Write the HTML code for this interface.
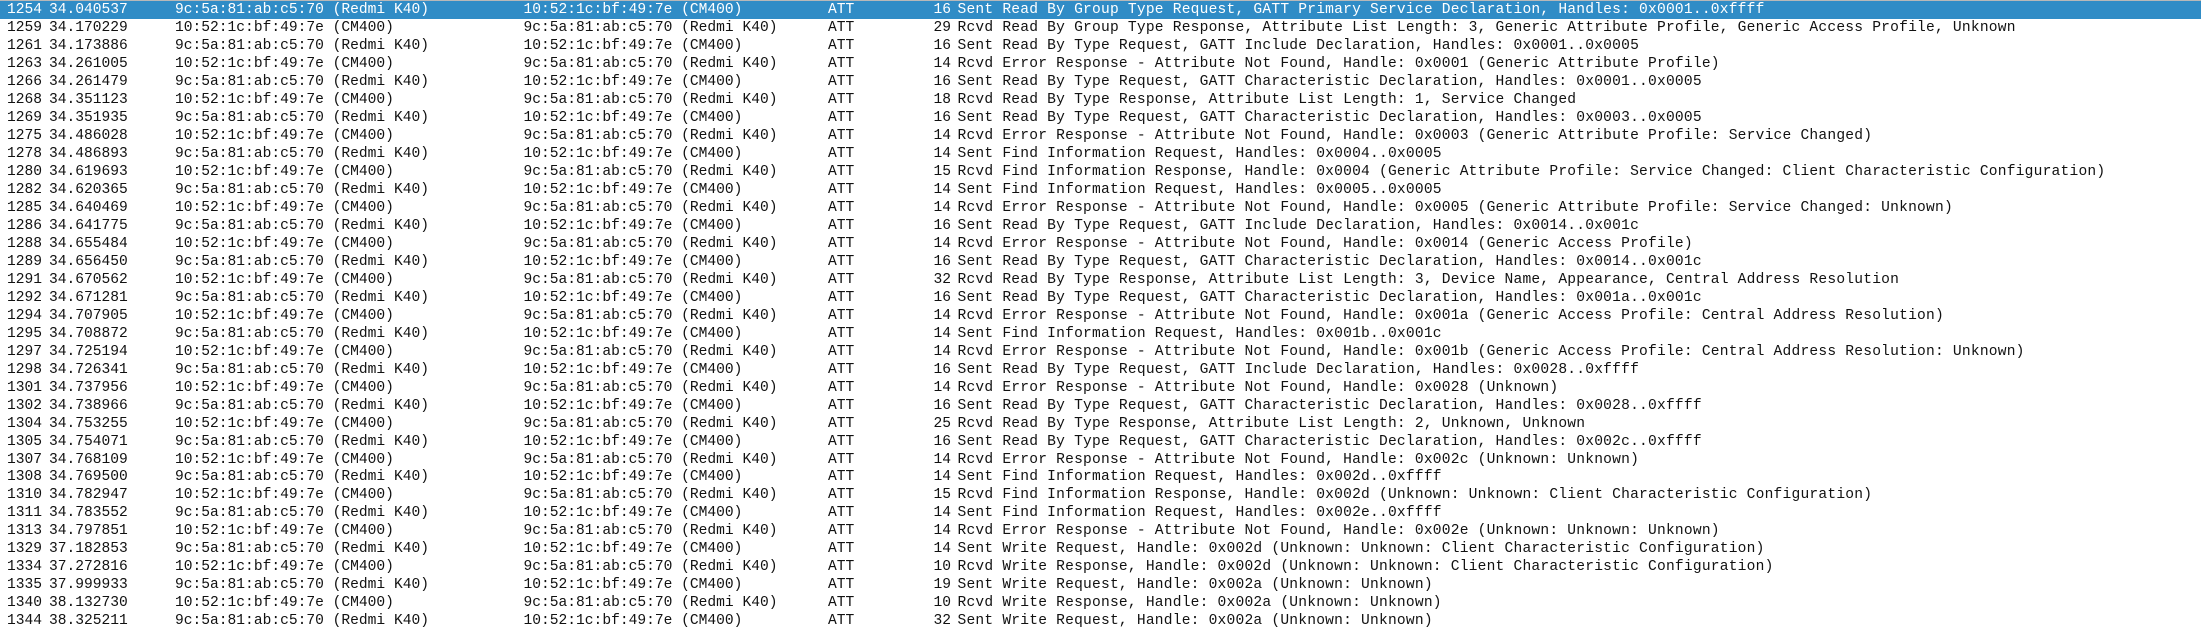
<!DOCTYPE html>
<html><head><meta charset="utf-8"><style>
html,body{margin:0;padding:0;width:2201px;height:630px;background:#fff;overflow:hidden}
body{position:relative;font-family:"Liberation Mono",monospace;font-size:14.6px;color:#111}
.topline{position:absolute;left:0;top:0;width:2201px;height:1px;background:#b8b8b8}
.r{position:absolute;left:0;width:2201px;height:18px;line-height:18px;white-space:pre}
.r span{position:absolute;top:0}
.sel{background:#308cc6;color:#fff}
.n{left:7px}.t{left:49px}.s{left:175px}.d{left:523.5px}.p{left:828px}
.l{right:1250px;text-align:right}
.i{left:957.5px;letter-spacing:0.21px}
</style></head><body>
<div class="topline"></div>
<div id="rows"></div>
<script>
var A="9c:5a:81:ab:c5:70 (Redmi K40)",B="10:52:1c:bf:49:7e (CM400)";
var d=[
["1254","34.040537",A,B,"16","Sent Read By Group Type Request, GATT Primary Service Declaration, Handles: 0x0001..0xffff"],
["1259","34.170229",B,A,"29","Rcvd Read By Group Type Response, Attribute List Length: 3, Generic Attribute Profile, Generic Access Profile, Unknown"],
["1261","34.173886",A,B,"16","Sent Read By Type Request, GATT Include Declaration, Handles: 0x0001..0x0005"],
["1263","34.261005",B,A,"14","Rcvd Error Response - Attribute Not Found, Handle: 0x0001 (Generic Attribute Profile)"],
["1266","34.261479",A,B,"16","Sent Read By Type Request, GATT Characteristic Declaration, Handles: 0x0001..0x0005"],
["1268","34.351123",B,A,"18","Rcvd Read By Type Response, Attribute List Length: 1, Service Changed"],
["1269","34.351935",A,B,"16","Sent Read By Type Request, GATT Characteristic Declaration, Handles: 0x0003..0x0005"],
["1275","34.486028",B,A,"14","Rcvd Error Response - Attribute Not Found, Handle: 0x0003 (Generic Attribute Profile: Service Changed)"],
["1278","34.486893",A,B,"14","Sent Find Information Request, Handles: 0x0004..0x0005"],
["1280","34.619693",B,A,"15","Rcvd Find Information Response, Handle: 0x0004 (Generic Attribute Profile: Service Changed: Client Characteristic Configuration)"],
["1282","34.620365",A,B,"14","Sent Find Information Request, Handles: 0x0005..0x0005"],
["1285","34.640469",B,A,"14","Rcvd Error Response - Attribute Not Found, Handle: 0x0005 (Generic Attribute Profile: Service Changed: Unknown)"],
["1286","34.641775",A,B,"16","Sent Read By Type Request, GATT Include Declaration, Handles: 0x0014..0x001c"],
["1288","34.655484",B,A,"14","Rcvd Error Response - Attribute Not Found, Handle: 0x0014 (Generic Access Profile)"],
["1289","34.656450",A,B,"16","Sent Read By Type Request, GATT Characteristic Declaration, Handles: 0x0014..0x001c"],
["1291","34.670562",B,A,"32","Rcvd Read By Type Response, Attribute List Length: 3, Device Name, Appearance, Central Address Resolution"],
["1292","34.671281",A,B,"16","Sent Read By Type Request, GATT Characteristic Declaration, Handles: 0x001a..0x001c"],
["1294","34.707905",B,A,"14","Rcvd Error Response - Attribute Not Found, Handle: 0x001a (Generic Access Profile: Central Address Resolution)"],
["1295","34.708872",A,B,"14","Sent Find Information Request, Handles: 0x001b..0x001c"],
["1297","34.725194",B,A,"14","Rcvd Error Response - Attribute Not Found, Handle: 0x001b (Generic Access Profile: Central Address Resolution: Unknown)"],
["1298","34.726341",A,B,"16","Sent Read By Type Request, GATT Include Declaration, Handles: 0x0028..0xffff"],
["1301","34.737956",B,A,"14","Rcvd Error Response - Attribute Not Found, Handle: 0x0028 (Unknown)"],
["1302","34.738966",A,B,"16","Sent Read By Type Request, GATT Characteristic Declaration, Handles: 0x0028..0xffff"],
["1304","34.753255",B,A,"25","Rcvd Read By Type Response, Attribute List Length: 2, Unknown, Unknown"],
["1305","34.754071",A,B,"16","Sent Read By Type Request, GATT Characteristic Declaration, Handles: 0x002c..0xffff"],
["1307","34.768109",B,A,"14","Rcvd Error Response - Attribute Not Found, Handle: 0x002c (Unknown: Unknown)"],
["1308","34.769500",A,B,"14","Sent Find Information Request, Handles: 0x002d..0xffff"],
["1310","34.782947",B,A,"15","Rcvd Find Information Response, Handle: 0x002d (Unknown: Unknown: Client Characteristic Configuration)"],
["1311","34.783552",A,B,"14","Sent Find Information Request, Handles: 0x002e..0xffff"],
["1313","34.797851",B,A,"14","Rcvd Error Response - Attribute Not Found, Handle: 0x002e (Unknown: Unknown: Unknown)"],
["1329","37.182853",A,B,"14","Sent Write Request, Handle: 0x002d (Unknown: Unknown: Client Characteristic Configuration)"],
["1334","37.272816",B,A,"10","Rcvd Write Response, Handle: 0x002d (Unknown: Unknown: Client Characteristic Configuration)"],
["1335","37.999933",A,B,"19","Sent Write Request, Handle: 0x002a (Unknown: Unknown)"],
["1340","38.132730",B,A,"10","Rcvd Write Response, Handle: 0x002a (Unknown: Unknown)"],
["1344","38.325211",A,B,"32","Sent Write Request, Handle: 0x002a (Unknown: Unknown)"]
];
var h="";
function e(s){return s.replace(/&/g,"&amp;").replace(/</g,"&lt;");}
for(var k=0;k<d.length;k++){var r=d[k];
h+='<div class="r'+(k==0?' sel':'')+'" style="top:'+(1+k*17.98).toFixed(2)+'px"><span class="n">'+r[0]+'</span><span class="t">'+r[1]+'</span><span class="s">'+e(r[2])+'</span><span class="d">'+e(r[3])+'</span><span class="p">ATT</span><span class="l">'+r[4]+'</span><span class="i">'+e(r[5])+'</span></div>';}
document.getElementById("rows").innerHTML=h;
</script>
</body></html>
